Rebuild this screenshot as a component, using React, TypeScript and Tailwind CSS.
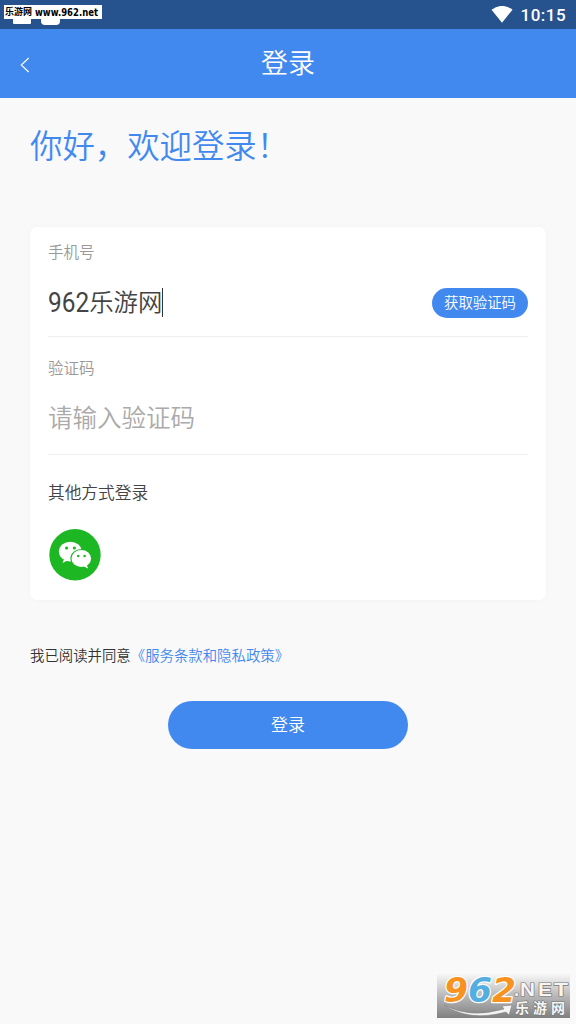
import React from "react";

const cjk = "font-['Noto_Sans_CJK_SC_DemiLight','Noto_Sans_CJK_SC',sans-serif] font-[350]";

function StatusBar() {
  return (
    <div className="relative flex h-[29px] items-center justify-end bg-[#26528e] pr-[10px]">
      <div className="absolute left-[13px] top-[10px] h-[14px] w-[18px] rounded-[1px] bg-white" />
      <div className="absolute left-[41px] top-[10px] h-[15px] w-[19px] rounded-[4px] bg-white" />
      <div className="absolute left-[4px] top-[5px] flex h-[14px] w-[98px] items-center whitespace-nowrap bg-white pl-px text-black">
        <span className="w-[30px] text-[9px] leading-[16px] font-bold font-['Noto_Sans_CJK_SC',sans-serif]">乐游网</span>
        <svg className="h-[14px] w-[66px] overflow-visible" viewBox="0 0 66 14">
          <text x="0" y="11" textLength="63" lengthAdjust="spacingAndGlyphs" className="text-[10px] font-bold font-['DejaVu_Sans',sans-serif]">www.962.net</text>
        </svg>
      </div>
      <svg className="mr-[8px] h-[18px] w-[22px]" viewBox="0 0 22 18">
        <path d="M0.5 3.7Q11-3.9 21.5 3.7L11 16.7Z" fill="#fff" />
      </svg>
      <span className="text-[17px] leading-[20px] font-medium tracking-[0.45px] text-white font-['Roboto',sans-serif]">10:15</span>
    </div>
  );
}

function WeChatIcon() {
  return (
    <svg className="h-[52px] w-[52px]" viewBox="0 0 52 52">
      <circle cx="26" cy="25.8" r="25.7" fill="#1db723" />
      <path d="M15 30.2L13.5 34L18.5 31.5Z" fill="#fff" />
      <ellipse cx="21.3" cy="22.6" rx="11.4" ry="9.9" fill="#fff" />
      <ellipse cx="32.3" cy="29.5" rx="10.9" ry="9.4" fill="#1db723" />
      <ellipse cx="32.3" cy="29.5" rx="9.8" ry="8.5" fill="#fff" />
      <path d="M34.5 37.2L39 39.4L37.8 35.5Z" fill="#fff" />
      <g fill="#1db723">
        <circle cx="17.6" cy="19" r="1.6" />
        <circle cx="25.4" cy="19" r="1.6" />
        <circle cx="29.3" cy="27" r="1.3" />
        <circle cx="35.6" cy="27" r="1.3" />
      </g>
    </svg>
  );
}

function SiteBadge() {
  return (
    <svg className="absolute left-[437px] top-[974px] h-[44px] w-[133px]" viewBox="0 0 133 44">
      <defs>
        <linearGradient id="plate" x1="0" y1="0" x2="0" y2="1">
          <stop offset="0" stopColor="#f7f7f7" />
          <stop offset="0.5" stopColor="#b8b8b8" />
          <stop offset="1" stopColor="#808080" />
        </linearGradient>
      </defs>
      <rect width="133" height="44" fill="url(#plate)" />
      <text x="7" y="28" textLength="72" lengthAdjust="spacingAndGlyphs" className="text-[33px] font-bold italic font-['DejaVu_Sans',sans-serif]" stroke="#fff" strokeWidth="2.4" strokeLinejoin="round" paintOrder="stroke"><tspan fill="#f7931e">9</tspan><tspan fill="#55aee0">6</tspan><tspan fill="#f7931e">2</tspan></text>
      <path d="M7 31Q33 45 67 35L65 32L75 31L72 41L69 38Q32 48 7 31Z" fill="#f4f4f4" stroke="#858585" strokeWidth="0.6" />
      <g fill="#f5f5f5" stroke="#777" strokeWidth="1.2" paintOrder="stroke">
        <g className="text-[18px] font-bold font-['Liberation_Sans',sans-serif]">
          <text x="77" y="22">.</text>
          <text x="83" y="22" textLength="15" lengthAdjust="spacingAndGlyphs">N</text>
          <text x="101" y="22" textLength="14" lengthAdjust="spacingAndGlyphs">E</text>
          <text x="117" y="22" textLength="14" lengthAdjust="spacingAndGlyphs">T</text>
        </g>
        <text x="78" y="39" textLength="50" lengthAdjust="spacing" className="text-[14px] font-bold font-['Noto_Sans_CJK_SC',sans-serif]">乐游网</text>
      </g>
    </svg>
  );
}

export default function App() {
  return (
    <div className={`relative h-[1024px] w-[576px] overflow-hidden bg-[#f9f9f9] ${cjk}`}>
      <StatusBar />
      <header className="relative flex h-[69px] items-center justify-center bg-[#4289ef] pb-[4px]">
        <svg className="absolute left-[20px] top-[28px] h-[16px] w-[10px]" viewBox="0 0 10 16" fill="none" stroke="#fff" strokeWidth="1.1">
          <path d="M8.7 1L1.2 8L8.7 15" />
        </svg>
        <h1 className="text-[27px] leading-[32px] font-[350] text-white">登录</h1>
      </header>
      <h2 className="mt-[26px] h-[44px] whitespace-nowrap pl-[30px] text-[32.4px] leading-[40px] font-[350] text-[#4289ef]">你好，欢迎登录！</h2>

      <main className="mx-[30px] mt-[59px] h-[373px] rounded-[7px] bg-white px-[18px] shadow-[0_0_6px_rgba(0,0,0,0.03)]">
        <section className="h-[110px] border-b border-[#eeeeee] pt-[14px]">
          <div className="text-[15.5px] leading-[20px] text-[#999]">手机号</div>
          <div className="mt-[27px] flex h-[30px] items-center justify-between">
            <div className="flex items-center whitespace-nowrap pb-[2px] text-[24.4px] leading-[30px] text-[#444]">
              <span className="inline-block origin-center translate-y-[1px] scale-y-[1.1] font-normal font-['Roboto',sans-serif]">962</span>
              <span className="-mt-[2px]">乐游网</span>
              <span className="h-[29px] w-px bg-[#333]" />
            </div>
            <button className="flex h-[30px] w-[96px] items-center justify-center whitespace-nowrap rounded-full bg-[#4289ef] pb-[2px] text-[14.4px] leading-[20px] text-white">获取验证码</button>
          </div>
        </section>
        <section className="h-[118px] border-b border-[#eeeeee] pt-[20px]">
          <div className="text-[15.5px] leading-[20px] text-[#999]">验证码</div>
          <div className="mt-[25px] text-[24.5px] leading-[30px] text-[#aaa]">请输入验证码</div>
        </section>
        <section className="pt-[27px]">
          <div className="text-[16.7px] leading-[20px] text-[#444]">其他方式登录</div>
          <div className="mt-[27px] pl-[1px]">
            <WeChatIcon />
          </div>
        </section>
      </main>

      <p className="mt-[45px] whitespace-nowrap pl-[30px] text-[14.4px] leading-[20px] text-[#333]">
        我已阅读并同意<span className="text-[#4289ef]">《服务条款和隐私政策》</span>
      </p>
      <button className="mx-auto mt-[36px] flex h-[48px] w-[240px] items-center justify-center rounded-full bg-[#4289ef] pb-[3px] text-[17px] leading-[22px] text-white">登录</button>
      <SiteBadge />
    </div>
  );
}
